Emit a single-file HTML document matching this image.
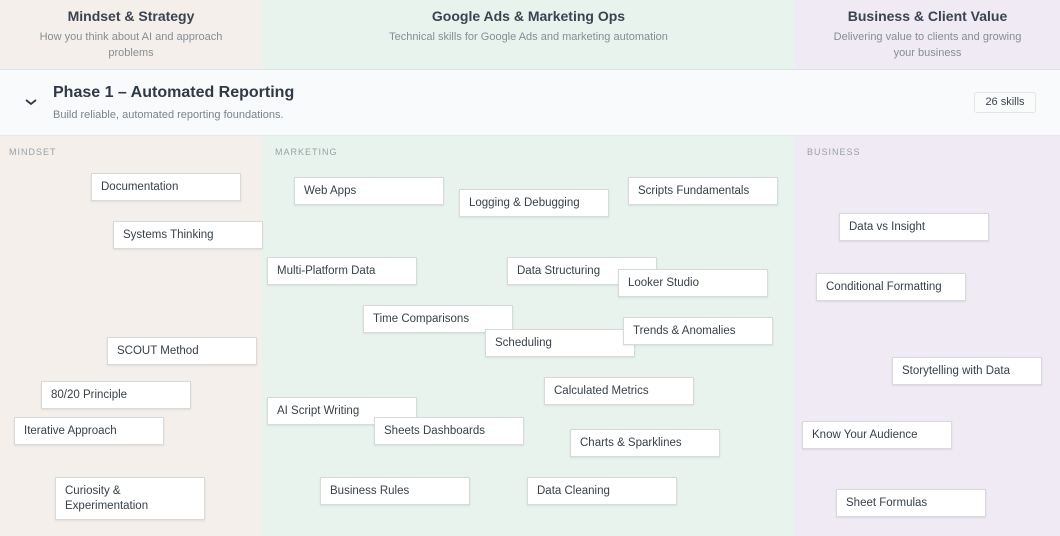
<!DOCTYPE html>
<html><head><meta charset="utf-8"><style>
*{box-sizing:border-box;margin:0;padding:0}
body{width:1060px;height:536px;overflow:hidden;font-family:"Liberation Sans",sans-serif;position:relative;background:#fff}
.col{position:absolute;top:0;height:536px}
.c1{left:0;width:262px;background:#f4efea}
.c2{left:262px;width:533px;background:#e8f3ee}
.c3{left:795px;width:265px;background:#efeaf4}
.hd{position:absolute;top:0;height:69px;text-align:center;padding-top:8px}
.hd h2{font-size:14px;font-weight:bold;color:#3a4450;margin-bottom:5px}
.hd p{font-size:11px;color:#858d94;line-height:16px}
.phase{position:absolute;left:0;top:69px;width:1060px;height:67px;background:#f8fafb;border-top:1px solid #dde2e4;border-bottom:1px solid #e4e8ea}
.phase h1{position:absolute;left:53px;top:14px;font-size:16px;font-weight:bold;color:#2f3a46}
.phase p{position:absolute;left:53px;top:39px;font-size:11px;color:#7b848c}
.chev{position:absolute;left:24px;top:27px}
.badge{position:absolute;left:974px;top:22px;width:62px;height:21px;border:1px solid #e2e6e8;border-radius:3px;background:#fafbfb;font-size:11px;color:#3b4450;text-align:center;line-height:19px}
.lab{position:absolute;top:147px;font-size:9px;letter-spacing:1px;color:#9aa1a6}
.k{position:absolute;width:150px;height:28px;background:#fff;border:1px solid #d6dadb;box-shadow:0 1px 2px rgba(0,0,0,.08);font-size:11.5px;color:#38414a;padding:6px 9px 0;line-height:15px}
</style></head><body>
<div class="col c1"></div><div class="col c2"></div><div class="col c3"></div>
<div class="hd" style="left:0;width:262px"><h2>Mindset &amp; Strategy</h2><p>How you think about AI and approach<br>problems</p></div>
<div class="hd" style="left:262px;width:533px"><h2>Google Ads &amp; Marketing Ops</h2><p>Technical skills for Google Ads and marketing automation</p></div>
<div class="hd" style="left:795px;width:265px"><h2>Business &amp; Client Value</h2><p>Delivering value to clients and growing<br>your business</p></div>
<div class="phase">
<svg class="chev" width="14" height="10" viewBox="0 0 14 10"><path d="M2 3l5 4 5-4" fill="none" stroke="#2f3a46" stroke-width="1.8"/></svg>
<h1>Phase 1 – Automated Reporting</h1>
<p>Build reliable, automated reporting foundations.</p>
<div class="badge">26 skills</div>
</div>
<div class="lab" style="left:9px">MINDSET</div>
<div class="lab" style="left:275px">MARKETING</div>
<div class="lab" style="left:807px">BUSINESS</div>

<div class="k" style="left:91px;top:173px">Documentation</div>
<div class="k" style="left:113px;top:221px">Systems Thinking</div>
<div class="k" style="left:107px;top:337px">SCOUT Method</div>
<div class="k" style="left:41px;top:381px">80/20 Principle</div>
<div class="k" style="left:14px;top:417px">Iterative Approach</div>
<div class="k" style="left:55px;top:477px;height:43px">Curiosity &amp;<br>Experimentation</div>

<div class="k" style="left:294px;top:177px">Web Apps</div>
<div class="k" style="left:459px;top:189px">Logging &amp; Debugging</div>
<div class="k" style="left:628px;top:177px">Scripts Fundamentals</div>
<div class="k" style="left:267px;top:257px">Multi-Platform Data</div>
<div class="k" style="left:507px;top:257px">Data Structuring</div>
<div class="k" style="left:618px;top:269px">Looker Studio</div>
<div class="k" style="left:363px;top:305px">Time Comparisons</div>
<div class="k" style="left:485px;top:329px">Scheduling</div>
<div class="k" style="left:623px;top:317px">Trends &amp; Anomalies</div>
<div class="k" style="left:544px;top:377px">Calculated Metrics</div>
<div class="k" style="left:267px;top:397px">AI Script Writing</div>
<div class="k" style="left:374px;top:417px">Sheets Dashboards</div>
<div class="k" style="left:570px;top:429px">Charts &amp; Sparklines</div>
<div class="k" style="left:320px;top:477px">Business Rules</div>
<div class="k" style="left:527px;top:477px">Data Cleaning</div>

<div class="k" style="left:839px;top:213px">Data vs Insight</div>
<div class="k" style="left:816px;top:273px">Conditional Formatting</div>
<div class="k" style="left:892px;top:357px">Storytelling with Data</div>
<div class="k" style="left:802px;top:421px">Know Your Audience</div>
<div class="k" style="left:836px;top:489px">Sheet Formulas</div>
</body></html>
